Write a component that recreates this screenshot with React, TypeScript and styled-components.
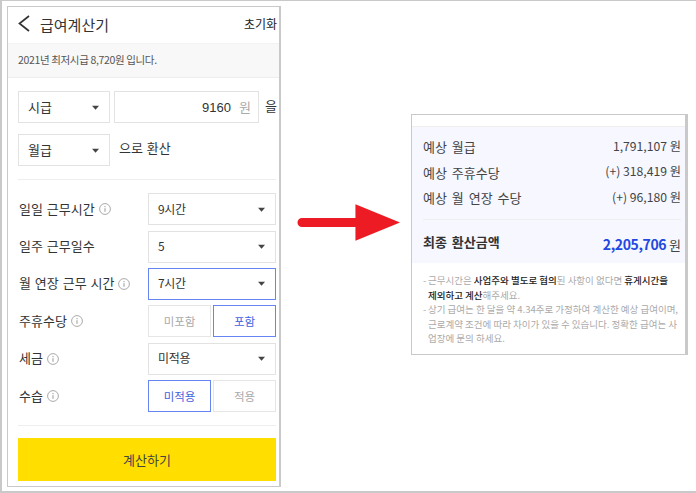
import styled, { createGlobalStyle } from "styled-components";

const GlobalStyle = createGlobalStyle`
	html, body {
		margin: 0;
		padding: 0;
		background: #fff;
	}
	* {
		box-sizing: border-box;
	}
	body {
		font-family: "Noto Sans CJK KR", "Noto Sans", sans-serif;
		color: #333;
	}
`;

function Caret() {
	return (
		<CaretIcon viewBox="0 0 8 5">
			<path d="M0 0.5h8L4 5z" fill="#444" />
		</CaretIcon>
	);
}

function Info() {
	return (
		<InfoIcon viewBox="0 0 12 12">
			<circle cx="6" cy="6" r="5.4" fill="none" stroke="#aaa" strokeWidth="1" />
			<path d="M6 5.2v3.6M6 3v1.2" stroke="#999" strokeWidth="1" />
		</InfoIcon>
	);
}

function SelectBox({ value, width, active }: { value: string; width?: number; active?: boolean }) {
	return (
		<Select $width={width} $active={active}>
			<span>{value}</span>
			<Caret />
		</Select>
	);
}

function FormRow({ label, info, children }: { label: string; info?: boolean; children: React.ReactNode }) {
	return (
		<Row>
			<RowLabel>
				{label}
				{info && <Info />}
			</RowLabel>
			<RowControl>{children}</RowControl>
		</Row>
	);
}

export default function App() {
	return (
		<>
			<GlobalStyle />
			<Frame>
				<Phone>
					<Header>
						<Title>
							<svg width="13" height="18" viewBox="0 0 13 18">
								<path d="M11 1L1.500 8.500 11 16" fill="none" stroke="#333" strokeWidth="1.7" />
							</svg>
							급여계산기
						</Title>
						<Reset>초기화</Reset>
					</Header>
					<Notice>2021년 최저시급 8,720원 입니다.</Notice>
					<Convert>
						<ConvertRow>
							<SelectBox value="시급" width={92} />
							<AmountBox>
								9160 <Unit>원</Unit>
							</AmountBox>
							<ConvertText>을</ConvertText>
						</ConvertRow>
						<ConvertRow>
							<SelectBox value="월급" width={92} />
							<ConvertText $wide>으로 환산</ConvertText>
						</ConvertRow>
					</Convert>
					<Fields>
						<FormRow label="일일 근무시간" info>
							<SelectBox value="9시간" />
						</FormRow>
						<FormRow label="일주 근무일수">
							<SelectBox value="5" />
						</FormRow>
						<FormRow label="월 연장 근무 시간" info>
							<SelectBox value="7시간" active />
						</FormRow>
						<FormRow label="주휴수당" info>
							<Toggle>미포함</Toggle>
							<Toggle $active>포함</Toggle>
						</FormRow>
						<FormRow label="세금" info>
							<SelectBox value="미적용" />
						</FormRow>
						<FormRow label="수습" info>
							<Toggle $active>미적용</Toggle>
							<Toggle>적용</Toggle>
						</FormRow>
					</Fields>
					<Submit>계산하기</Submit>
				</Phone>
				<Arrow viewBox="0 0 105 37" width="104" height="37">
					<path d="M5 14h54V0l45 18.500-45 18.500V23H5a4.500 4.500 0 0 1 0-9z" fill="#ed1c24" />
				</Arrow>
				<Result>
					<ResultBody>
						<ResultRow>
							<ResultLabel>예상 월급</ResultLabel>
							<span>1,791,107 원</span>
						</ResultRow>
						<ResultRow>
							<ResultLabel>예상 주휴수당</ResultLabel>
							<span>(+) 318,419 원</span>
						</ResultRow>
						<ResultRow>
							<ResultLabel>예상 월 연장 수당</ResultLabel>
							<span>(+) 96,180 원</span>
						</ResultRow>
						<Total>
							<TotalLabel>최종 환산금액</TotalLabel>
							<span>
								<TotalValue>2,205,706</TotalValue> 원
							</span>
						</Total>
					</ResultBody>
					<Notes>
						<Note>
							근무시간은 <b>사업주와 별도로 협의</b>된 사항이 없다면 <b>휴게시간을</b> <b>제외하고 계산</b>해주세요.
						</Note>
						<Note>
							상기 급여는 한 달을 약 4.34주로 가정하여 계산한 예상 급여이며, 근로계약 조건에 따라 차이가 있을 수 있습니다. 정확한
							급여는 사업장에 문의 하세요.
						</Note>
					</Notes>
				</Result>
			</Frame>
		</>
	);
}

const Frame = styled.div`
	width: 696px;
	height: 493px;
	border: solid #c9c9c9;
	border-width: 1px 0 2px 2px;
	padding: 5px 8px 3px 5px;
	display: flex;
	align-items: flex-start;
	overflow: hidden;
`;

const Phone = styled.section`
	width: 274px;
	height: 481px;
	flex: none;
	border: 1px solid #c9c9c9;
	border-width: 1px 2px 1px 1px;
	background: #fff;
`;

const Header = styled.header`
	height: 36px;
	padding: 0 2px 2px 10px;
	display: flex;
	justify-content: space-between;
	align-items: center;
`;

const Title = styled.h1`
	margin: 0;
	display: flex;
	align-items: center;
	gap: 9px;
	font-size: 15px;
	font-weight: 400;
	color: #333;
`;

const Reset = styled.button`
	border: none;
	background: transparent;
	padding: 0 0 1px;
	font: inherit;
	font-size: 12px;
	color: #222;
`;

const Notice = styled.p`
	margin: 0;
	height: 35px;
	padding: 0 10px 2px;
	display: flex;
	align-items: center;
	background: #f8f8f8;
	border-top: 1px solid #f3f3f3;
	border-bottom: 1px solid #eee;
	font-size: 10.5px;
	letter-spacing: -0.35px;
	color: #555;
`;

const Convert = styled.div`
	margin: 13px 3px 0 10px;
	padding-bottom: 13px;
	border-bottom: 1px solid #eee;
	display: flex;
	flex-direction: column;
	gap: 11px;
`;

const ConvertRow = styled.div`
	display: flex;
	align-items: center;
	gap: 4px;
	height: 32px;
`;

const ConvertText = styled.span<{ $wide?: boolean }>`
	margin: 0 0 ${(p) => (p.$wide ? "5px 5px" : "3px 2px")};
	font-size: 13px;
	word-spacing: ${(p) => (p.$wide ? "1px" : "0")};
	color: #333;
	white-space: nowrap;
`;

const Select = styled.div<{ $width?: number; $active?: boolean }>`
	width: ${(p) => (p.$width ? `${p.$width}px` : "100%")};
	height: 32px;
	flex: none;
	padding: 0 10px 2px 9px;
	border: 1px solid ${(p) => (p.$active ? "#6684f2" : "#e2e2e2")};
	display: flex;
	justify-content: space-between;
	align-items: center;
	font-size: 12px;
	letter-spacing: -0.3px;
	color: #333;

	${ConvertRow} & {
		font-size: 13px;
		letter-spacing: 0;
	}
`;

const CaretIcon = styled.svg`
	width: 7px;
	height: 5px;
	margin-top: 2px;
`;

const InfoIcon = styled.svg`
	width: 12px;
	height: 12px;
	margin: 2px 0 0 4px;
`;

const AmountBox = styled.div`
	width: 145px;
	height: 32px;
	flex: none;
	padding: 0 7px 0 9px;
	border: 1px solid #e2e2e2;
	display: flex;
	justify-content: flex-end;
	align-items: center;
	gap: 8px;
	font-family: "Liberation Sans", sans-serif;
	font-size: 13px;
	color: #333;
`;

const Unit = styled.span`
	font-family: "Noto Sans CJK KR", sans-serif;
	color: #aaa;
	margin-bottom: 2px;
`;

const Fields = styled.div`
	margin: 13px 3px 0 10px;
	padding-bottom: 13px;
	border-bottom: 1px solid #eee;
	display: flex;
	flex-direction: column;
	gap: 5px;
`;

const Row = styled.div`
	display: flex;
	align-items: center;
	justify-content: space-between;
	height: 32.4px;
`;

const RowLabel = styled.span`
	display: flex;
	align-items: center;
	padding: 0 0 2px 1px;
	font-size: 13px;
	word-spacing: 1px;
	white-space: pre;
	color: #333;
`;

const RowControl = styled.div`
	width: 128px;
	flex: none;
	display: flex;
	gap: 2px;
`;

const Toggle = styled.div<{ $active?: boolean }>`
	flex: 1;
	height: 32px;
	border: 1px solid ${(p) => (p.$active ? "#6684f2" : "#e6e6e6")};
	display: flex;
	justify-content: center;
	align-items: center;
	font-size: 11.5px;
	color: ${(p) => (p.$active ? "#3f62e0" : "#aaa")};
`;

const Submit = styled.button`
	display: block;
	width: 258px;
	height: 43px;
	margin: 12px 0 0 10px;
	padding: 0;
	border: none;
	background: #ffde00;
	font: inherit;
	font-size: 13px;
	color: #444;
`;

const Arrow = styled.svg`
	flex: none;
	margin: 198px 0 0 16px;
`;

const Result = styled.section`
	width: 277px;
	height: 241px;
	flex: none;
	margin: 108px 0 0 10px;
	padding-top: 11px;
	border: 1px solid #c9c9c9;
	border-width: 1px 3px 1px 1px;
	background: #fff;
`;

const ResultBody = styled.div`
	height: 137px;
	padding: 6px 4px 0 11px;
	background: #f6f7ff;
	border-top: 1px solid #eee;
`;

const ResultRow = styled.div`
	height: 25.5px;
	display: flex;
	justify-content: space-between;
	align-items: center;
	font-size: 12.2px;
	color: #444;
`;

const ResultLabel = styled.span`
	margin-top: 2px;
	font-size: 13px;
	word-spacing: 2px;
`;

const Total = styled.div`
	margin-top: 9px;
	padding-top: 12px;
	border-top: 1px solid #eee;
	display: flex;
	justify-content: space-between;
	align-items: center;
	font-size: 13px;
	color: #444;
`;

const TotalLabel = styled.span`
	margin-bottom: 6px;
	font-size: 13px;
	font-weight: 700;
	word-spacing: 2px;
	color: #333;
`;

const TotalValue = styled.strong`
	font-size: 14px;
	font-weight: 700;
	letter-spacing: -0.4px;
	color: #2347e0;
`;

const Notes = styled.ul`
	margin: 0;
	padding: 10px 7px 0 11px;
	list-style: none;
	font-size: 9.5px;
	line-height: 14.5px;
	color: #aaa;
`;

const Note = styled.li`
	padding-left: 5px;
	position: relative;

	&::before {
		content: "-";
		position: absolute;
		left: 0;
	}

	& b {
		font-weight: 500;
		color: #222;
	}
`;
